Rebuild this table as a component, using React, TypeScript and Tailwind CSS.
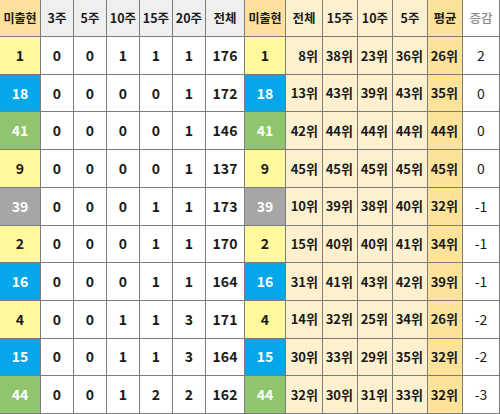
const rows: [number, number[], number, number[], string, string][] = [
  [1, [0, 0, 1, 1, 1], 176, [8, 38, 23, 36, 26], "2", "yellow"],
  [18, [0, 0, 0, 0, 1], 172, [13, 43, 39, 43, 35], "0", "blue"],
  [41, [0, 0, 0, 0, 1], 146, [42, 44, 44, 44, 44], "0", "green"],
  [9, [0, 0, 0, 0, 1], 137, [45, 45, 45, 45, 45], "0", "yellow"],
  [39, [0, 0, 0, 1, 1], 173, [10, 39, 38, 40, 32], "-1", "gray"],
  [2, [0, 0, 0, 1, 1], 170, [15, 40, 40, 41, 34], "-1", "yellow"],
  [16, [0, 0, 0, 1, 1], 164, [31, 41, 43, 42, 39], "-1", "blue"],
  [4, [0, 0, 1, 1, 3], 171, [14, 32, 25, 34, 26], "-2", "yellow"],
  [15, [0, 0, 1, 1, 3], 164, [30, 33, 29, 35, 32], "-2", "blue"],
  [44, [0, 0, 1, 2, 2], 162, [32, 30, 31, 33, 32], "-3", "green"],
];

const ballStyle: Record<string, string> = {
  yellow: "bg-[#fff89c] text-[#1a1a1a]",
  blue: "bg-[#06a6ea] text-white",
  green: "bg-[#90c56d] text-white",
  gray: "bg-[#a6a6a6] text-white",
};

const cell = "flex items-center border-r border-b border-[#7c7c7c]";

function Ball({ n, color }: { n: number; color: string }) {
  return (
    <div className={`${cell} justify-center text-[14px] ${ballStyle[color]}`}>{n}</div>
  );
}

export default function App() {
  return (
    <div
      className="grid h-[414px] w-[500px] grid-cols-[41px_33px_33px_33px_33px_33px_39px_41px_37px_35px_35px_35px_35px_37px] grid-rows-[37px_repeat(10,minmax(0,1fr))] bg-white text-[13px] font-bold text-[#1a1a1a]"
      style={{ fontFamily: '"Noto Sans CJK KR", "Noto Sans", sans-serif' }}
    >
      {/* header */}
      <div className={`${cell} justify-center bg-[#ffe09c] text-[12px]`}>미출현</div>
      {["3주", "5주", "10주", "15주", "20주", "전체"].map((h) => (
        <div key={h} className={`${cell} justify-center bg-[#efefef] text-[12.5px]`}>
          {h}
        </div>
      ))}
      <div className={`${cell} justify-center bg-[#ffe09c] text-[12px]`}>미출현</div>
      {["전체", "15주", "10주", "5주"].map((h) => (
        <div key={"r" + h} className={`${cell} justify-center bg-[#fdf0cf] text-[12.5px]`}>
          {h}
        </div>
      ))}
      <div className={`${cell} justify-center bg-[#fde39a] text-[12.5px]`}>평균</div>
      <div className={`${cell} justify-center bg-white text-[12.5px] font-medium text-[#8a8a8a]`}>
        증감
      </div>

      {rows.map(([n, counts, total, ranks, delta, color]) => (
        <div key={n} className="contents">
          <Ball n={n} color={color} />
          {counts.map((c, i) => (
            <div key={i} className={`${cell} justify-center bg-white text-[14px]`}>
              {c}
            </div>
          ))}
          <div className={`${cell} justify-center bg-white text-[14px]`}>{total}</div>
          <Ball n={n} color={color} />
          {ranks.map((r, i) => (
            <div
              key={"k" + i}
              className={`${cell} justify-end pr-[4px] ${i === 4 ? "bg-[#fde39a]" : "bg-[#fdf0cf]"}`}
            >
              {r}위
            </div>
          ))}
          <div className={`${cell} justify-center bg-white font-normal text-[14px]`}>{delta}</div>
        </div>
      ))}
    </div>
  );
}
